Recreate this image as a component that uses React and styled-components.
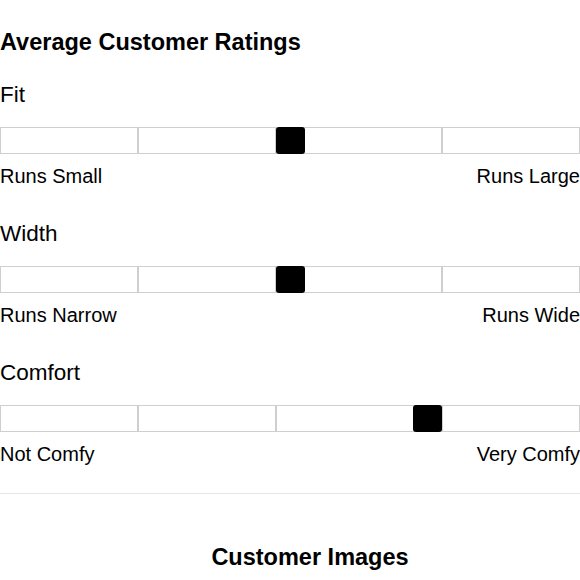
import React from "react";
import styled, { createGlobalStyle } from "styled-components";

const GlobalStyle = createGlobalStyle`
  body {
    margin: 0;
    background: #fff;
    font-family: "Liberation Sans", Arial, sans-serif;
    color: #000;
  }
`;

const Page = styled.div`
  width: 580px;
  padding-top: 31px;
`;

const Heading = styled.h2`
  margin: 0;
  font-size: 23.5px;
  line-height: 1;
  font-weight: 700;
  text-align: ${props => (props.center ? "center" : "left")};
  padding-left: ${props => (props.center ? "40px" : "0")};
`;

const Section = styled.div`
  margin-top: ${props => props.gap}px;
`;

const Title = styled.div`
  font-size: 22.5px;
  line-height: 1;
`;

const Bar = styled.div`
  display: flex;
  height: 27px;
  margin-top: 20.5px;
`;

const Segment = styled.div`
  flex: 1 1 ${props => (props.hasMarker ? "31px" : "0px")};
  display: flex;
  justify-content: ${props => props.align || "flex-start"};
  border: 1px solid #cfcfcf;
  box-sizing: border-box;
`;

const Marker = styled.div`
  width: 29px;
  height: 27px;
  margin: -1px;
  background: #000;
  border-radius: 3px;
  flex: none;
`;

const Labels = styled.div`
  display: flex;
  justify-content: space-between;
  margin-top: 12px;
  font-size: 20px;
  line-height: 1;
`;

const Divider = styled.hr`
  margin: 29px 0 0;
  border: none;
  border-top: 1px solid #e6e6e6;
`;

const ratings = [
  { title: "Fit", low: "Runs Small", high: "Runs Large", align: "flex-start" },
  { title: "Width", low: "Runs Narrow", high: "Runs Wide", align: "flex-start" },
  { title: "Comfort", low: "Not Comfy", high: "Very Comfy", align: "flex-end" }
];

const RatingRow = ({ title, low, high, align, gap }) => (
  <Section gap={gap}>
    <Title>{title}</Title>
    <Bar>
      {[0, 1, 2, 3].map(i => (
        <Segment key={i} hasMarker={i === 2} align={align}>
          {i === 2 && <Marker />}
        </Segment>
      ))}
    </Bar>
    <Labels>
      <span>{low}</span>
      <span>{high}</span>
    </Labels>
  </Section>
);

export default function App() {
  return (
    <Page>
      <GlobalStyle />
      <Heading>Average Customer Ratings</Heading>
      {ratings.map((r, i) => (
        <RatingRow key={r.title} {...r} gap={i === 0 ? 29.5 : 37} />
      ))}
      <Divider />
      <Section gap={52}>
        <Heading center>Customer Images</Heading>
      </Section>
    </Page>
  );
}
